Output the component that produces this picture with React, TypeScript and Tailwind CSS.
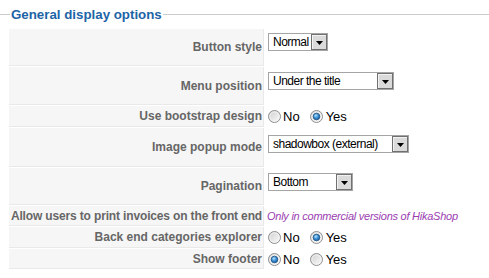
import React from "react"

type Row = {
  label: string
  h: number
  kind: "select" | "radio" | "note"
  value?: string
  width?: number
  pt?: number
  checked?: "no" | "yes"
}

const rows: Row[] = [
  { label: "Button style", h: 37, kind: "select", value: "Normal", width: 60, pt: 4 },
  { label: "Menu position", h: 38, kind: "select", value: "Under the title", width: 126, pt: 5 },
  { label: "Use bootstrap design", h: 21, kind: "radio", checked: "yes" },
  { label: "Image popup mode", h: 39, kind: "select", value: "shadowbox (external)", width: 141, pt: 7 },
  { label: "Pagination", h: 37, kind: "select", value: "Bottom", width: 85, pt: 5 },
  { label: "Allow users to print invoices on the front end", h: 20, kind: "note" },
  { label: "Back end categories explorer", h: 21, kind: "radio", checked: "yes" },
  { label: "Show footer", h: 20, kind: "radio", checked: "no" },
]

function Radio({ on }: { on: boolean }) {
  return (
    <svg width="13" height="13" viewBox="0 0 13 13" className="shrink-0">
      <defs>
        <linearGradient id="ring" x1="0" y1="0" x2="1" y2="1">
          <stop offset="0" stopColor="#cdcdcd" />
          <stop offset="1" stopColor="#fdfdfd" />
        </linearGradient>
        <radialGradient id="dot" cx="0.4" cy="0.35" r="0.7">
          <stop offset="0" stopColor="#b4e2fc" />
          <stop offset="0.5" stopColor="#3b92d6" />
          <stop offset="1" stopColor="#1a5a9a" />
        </radialGradient>
      </defs>
      <circle cx="6.5" cy="6.5" r="6" fill="url(#ring)" stroke="#8e8f8f" />
      <circle cx="6.5" cy="6.5" r="4.6" fill="none" stroke="#f4f4f4" strokeWidth="0.8" />
      {on && <circle cx="6.5" cy="6.5" r="3.3" fill="url(#dot)" stroke="#1d4f80" strokeWidth="0.8" />}
    </svg>
  )
}

function Select({ value, width }: { value: string; width: number }) {
  return (
    <div
      className="h-[18px] border border-[#a5a5a5] bg-white flex items-stretch"
      style={{ width }}
    >
      <span className="flex-1 pl-[4px] text-[12px] tracking-[-0.5px] leading-[16px] text-black whitespace-nowrap overflow-hidden">
        {value}
      </span>
      <span className="w-[16px] border border-[#707070] bg-[#dadada] shadow-[inset_1px_1px_0_#f2f2f2] flex items-center justify-center pt-[2px]">
        <svg width="7" height="4" viewBox="0 0 7 4">
          <path d="M0 0H7L3.5 4Z" fill="#000" />
        </svg>
      </span>
    </div>
  )
}

export default function App() {
  return (
    <div className="w-[489px] h-[278px] overflow-hidden bg-white font-['Liberation_Sans',Arial,sans-serif]">
      {/* Fieldset legend */}
      <div className="h-[29px] flex items-center">
        <div className="w-[10px] h-px bg-[#cccccc]" />
        <span className="px-[1px] text-[13.3px] font-bold leading-none text-[#1d64a6] whitespace-nowrap">
          General display options
        </span>
        <div className="flex-1 h-px bg-[#cccccc]" />
      </div>

      {/* Options table */}
      <div className="pl-[9px] flex flex-col gap-[1px]">
        {rows.map((r) => (
          <div key={r.label} className="flex gap-[1px]" style={{ height: r.h }}>
            <div className="w-[255px] shrink-0 bg-[#f6f6f6] border-b border-r border-[#e9e9e9] flex items-center justify-end pr-[1px] text-[12px] font-bold text-[#666666] whitespace-nowrap">
              <span className={r.kind === "note" ? "tracking-[-0.15px]" : ""}>{r.label}</span>
            </div>
            {r.kind === "select" && (
              <div className="flex-1 pl-[3px]" style={{ paddingTop: r.pt }}>
                <Select value={r.value!} width={r.width!} />
              </div>
            )}
            {r.kind === "radio" && (
              <div className="flex-1 pl-[3px] flex items-center text-[13px] leading-none text-black">
                <Radio on={r.checked === "no"} />
                <span className="ml-[2px]">No</span>
                <span className="ml-[10px] flex">
                  <Radio on={r.checked === "yes"} />
                </span>
                <span className="ml-[3px]">Yes</span>
              </div>
            )}
            {r.kind === "note" && (
              <div className="flex-1 pl-[2px] flex items-center text-[11px] italic tracking-[-0.25px] text-[#9a3db0] whitespace-nowrap">
                Only in commercial versions of HikaShop
              </div>
            )}
          </div>
        ))}
      </div>
    </div>
  )
}
